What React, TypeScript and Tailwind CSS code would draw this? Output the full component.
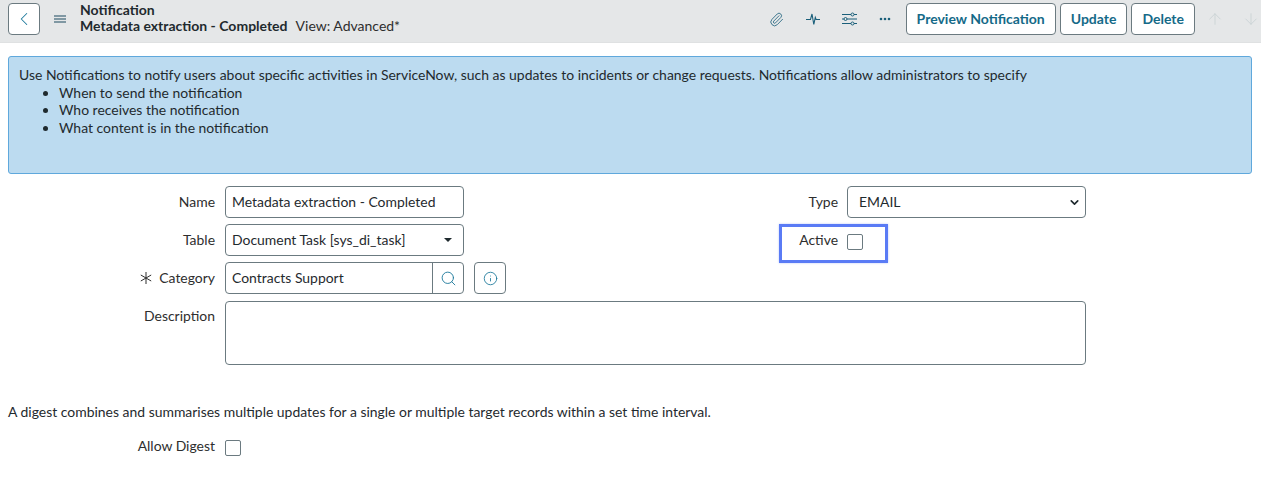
import React from "react";
import { Paperclip, ArrowUp, ArrowDown, ChevronLeft, Search, Info, ChevronDown } from "lucide-react";

function HeaderButton({ children }: { children: React.ReactNode }) {
  return (
    <button className="h-[32px] px-[10px] pb-[2px] rounded-[4px] border border-[#6b7a80] bg-white text-[14px] font-bold text-[#156a88]">
      {children}
    </button>
  );
}

function Label({ children }: { children: React.ReactNode }) {
  return <span className="text-[13.95px] text-[#2e2e2e]">{children}</span>;
}

export default function App() {
  return (
    <div className="w-[1261px] h-[485px] overflow-hidden bg-white text-[#1f2a2e] font-['Lato','Open_Sans',sans-serif] text-[13.95px] antialiased">
      {/* Top bar */}
      <header className="h-[43px] bg-[#e5e7e8] border-b border-[#dfe1e2] flex items-center pl-[8px] pr-[1px] pb-[4px]">
        <button className="w-[32px] h-[32px] rounded-[4px] border border-[#6b7a80] bg-white flex items-center justify-center text-[#1f7a9c]">
          <ChevronLeft className="w-[22px] h-[22px]" strokeWidth={1.1} />
        </button>
        <svg viewBox="0 0 12 8" className="w-[12px] h-[8px] ml-[14px] text-[#5f7f8c]">
          <path d="M0 1h12M0 4h12M0 7h12" stroke="currentColor" strokeWidth="1.3" />
        </svg>
        <div className="ml-[14px] leading-[16px] -mt-[2px]">
          <div className="font-bold text-[14px] text-[#1f2a2e]">Notification</div>
          <div className="text-[14px] whitespace-nowrap">
            <span className="font-bold">Metadata extraction - Completed</span>
            <span className="ml-[8px] text-[#2e2e2e]">View: Advanced*</span>
          </div>
        </div>
        <div className="ml-auto flex items-center">
          <Paperclip className="w-[15px] h-[15px] text-[#1a5f7a] mr-[22px]" strokeWidth={1.3} />
          <svg viewBox="0 0 14 14" fill="none" className="w-[14px] h-[14px] text-[#1a5f7a] mr-[22px]">
            <path d="M0 7.5h4.5L6 2l1.8 10.5L9.3 5.5l.8 2h3.9" stroke="currentColor" strokeWidth="1.1" />
          </svg>
          <svg viewBox="0 0 15 14" fill="none" className="w-[15px] h-[14px] text-[#1a5f7a] mr-[22px]">
            <path d="M0 2.5h9M12 2.5h3M0 7h2M5 7h10M0 11.5h9M12 11.5h3" stroke="currentColor" strokeWidth="1" />
            <circle cx="10.5" cy="2.5" r="1.5" stroke="currentColor" />
            <circle cx="3.5" cy="7" r="1.5" stroke="currentColor" />
            <circle cx="10.5" cy="11.5" r="1.5" stroke="currentColor" />
          </svg>
          <svg viewBox="0 0 12 4" className="w-[12px] h-[4px] text-[#1a5f7a] mr-[15px]">
            <circle cx="2" cy="2" r="1.3" fill="currentColor" />
            <circle cx="6" cy="2" r="1.3" fill="currentColor" />
            <circle cx="10" cy="2" r="1.3" fill="currentColor" />
          </svg>
          <div className="flex gap-[4px]">
            <HeaderButton>Preview Notification</HeaderButton>
            <HeaderButton>Update</HeaderButton>
            <HeaderButton>Delete</HeaderButton>
          </div>
          <ArrowUp className="w-[18px] h-[18px] text-[#c9d2d5] ml-[11px]" strokeWidth={1.2} />
          <ArrowDown className="w-[18px] h-[18px] text-[#c9d2d5] ml-[18px]" strokeWidth={1.2} />
        </div>
      </header>

      {/* Info message */}
      <div className="mx-[8px] mt-[13px] w-[1244px] h-[118px] rounded-[3px] border border-[#5fa8dc] bg-[#bcdbf0] pl-[10px] pt-[9px] leading-[17.6px] text-[#1f2a2e]">
        <p>Use Notifications to notify users about specific activities in ServiceNow, such as updates to incidents or change requests. Notifications allow administrators to specify</p>
        <ul className="list-disc pl-[40px]">
          <li>When to send the notification</li>
          <li>Who receives the notification</li>
          <li>What content is in the notification</li>
        </ul>
      </div>

      {/* Form */}
      <div className="mt-[12px] flex">
        <div className="w-[464px] flex flex-col gap-[6px]">
          <div className="flex items-center h-[32px]">
            <div className="w-[215px] text-right"><Label>Name</Label></div>
            <div className="ml-[10px] w-[239px] h-[32px] rounded-[4px] border border-[#6b7a80] px-[6px] flex items-center">Metadata extraction - Completed</div>
          </div>
          <div className="flex items-center h-[32px]">
            <div className="w-[215px] text-right"><Label>Table</Label></div>
            <div className="ml-[10px] w-[239px] h-[32px] rounded-[4px] border border-[#6b7a80] pl-[6px] pr-[11px] flex items-center justify-between">
              <span>Document Task [sys_di_task]</span>
              <span className="w-0 h-0 mb-[1px] border-x-[4px] border-x-transparent border-t-[4px] border-t-[#1f2a2e]" />
            </div>
          </div>
          <div className="flex items-center h-[32px]">
            <div className="w-[215px] flex items-center justify-end gap-[7px]">
              <svg viewBox="0 0 12 12" fill="none" className="w-[12px] h-[12px] text-[#2e2e2e]">
                <path d="M6 0v12M.8 3l10.4 6M.8 9l10.4-6" stroke="currentColor" strokeWidth="1" />
              </svg>
              <Label>Category</Label>
            </div>
            <div className="ml-[10px] w-[239px] h-[32px] rounded-[4px] border border-[#6b7a80] flex items-center">
              <span className="flex-1 px-[6px]">Contracts Support</span>
              <span className="w-[31px] h-full border-l border-[#6b7a80] flex items-center justify-center text-[#1f7a9c]">
                <Search className="w-[17px] h-[17px]" strokeWidth={1.3} />
              </span>
            </div>
          </div>
        </div>
        <div className="ml-[10px] h-[32px] w-0 self-end overflow-visible">
          <button className="w-[32px] h-[32px] rounded-[4px] border border-[#6b7a80] flex items-center justify-center text-[#1f7a9c]">
            <Info className="w-[15px] h-[15px]" strokeWidth={1.4} />
          </button>
        </div>
        <div className="ml-[305px] flex flex-col">
          <div className="flex items-center h-[32px]">
            <span className="w-[59px] text-right"><Label>Type</Label></span>
            <div className="ml-[9px] w-[239px] h-[32px] rounded-[4px] border border-[#6b7a80] pl-[11px] pr-[4px] flex items-center justify-between">
              <span>EMAIL</span>
              <ChevronDown className="w-[13px] h-[13px] text-[#1f2a2e]" strokeWidth={3} />
            </div>
          </div>
          <div className="mt-[6px] w-[109px] h-[39px] border-[3px] border-[#5a7bf5] flex items-center shadow-[0_0_2px_rgba(90,120,240,0.4)]">
            <span className="w-[56px] text-right pb-[7px]"><Label>Active</Label></span>
            <span className="ml-[9px] mt-[-3px] w-[16px] h-[16px] rounded-[2px] border border-[#6b7a80]" />
          </div>
        </div>
      </div>

      <div className="mt-[7px] flex">
        <div className="w-[215px] text-right pt-[5px]"><Label>Description</Label></div>
        <div className="ml-[10px] w-[861px] h-[64px] rounded-[4px] border border-[#6b7a80]" />
      </div>

      {/* Digest */}
      <p className="mt-[38px] ml-[8px] leading-[18px]">A digest combines and summarises multiple updates for a single or multiple target records within a set time interval.</p>
      <div className="mt-[15px] flex items-center">
        <div className="w-[215px] text-right pb-[4px]"><Label>Allow Digest</Label></div>
        <span className="ml-[10px] w-[16px] h-[16px] rounded-[2px] border border-[#6b7a80]" />
      </div>
      <div className="mt-[29px] border-t border-[#eceeef]" />
    </div>
  );
}
